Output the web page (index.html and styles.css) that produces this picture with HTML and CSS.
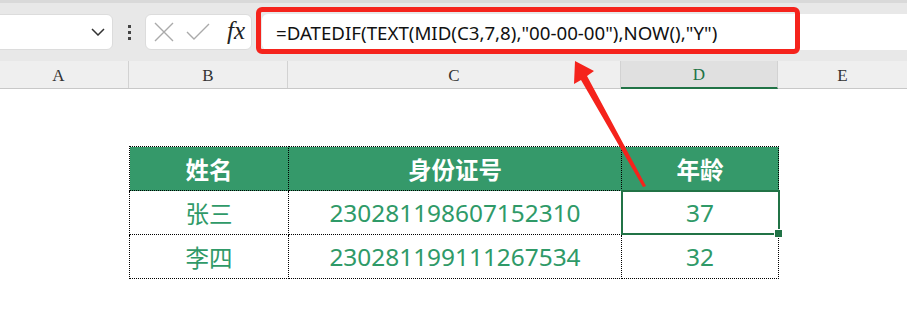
FILE: index.html
```html
<!DOCTYPE html>
<html lang="zh">
<head>
  <meta charset="UTF-8" />
  <title>年龄计算</title>
  <link rel="stylesheet" href="styles.css">
</head>
<body>

  <!-- formula bar -->
  <div class="toolbar">
    <div class="namebox">
      <svg class="chevron" width="14" height="8" viewBox="0 0 14 8"><path d="M1 1 L7 7 L13 1" fill="none" stroke="#333" stroke-width="1.5"/></svg>
    </div>
    <div class="more"><span></span><span></span><span></span></div>
    <div class="fnbox">
      <svg width="22" height="22" viewBox="0 0 22 22"><path d="M2 2 L20 20 M20 2 L2 20" stroke="#aaa" stroke-width="1.4" fill="none"/></svg>
      <svg width="24" height="20" viewBox="0 0 24 20"><path d="M1 10 L8 17 L23 2" stroke="#aaa" stroke-width="1.4" fill="none"/></svg>
      <span class="fx">fx</span>
    </div>
    <div class="formula">=DATEDIF(TEXT(MID(C3,7,8),"00-00-00"),NOW(),"Y")</div>
    <div class="mark"></div>
  </div>

  <!-- column letters -->
  <div class="colhead">
    <div class="col a">A</div>
    <div class="col b">B</div>
    <div class="col c">C</div>
    <div class="col d active">D</div>
    <div class="col e">E</div>
  </div>

  <div class="sheet">
    <table class="grid">
      <tr>
        <th class="w-name">姓名</th>
        <th class="w-id">身份证号</th>
        <th class="w-age">年龄</th>
      </tr>
      <tr>
        <td>张三</td>
        <td>230281198607152310</td>
        <td class="selected">37</td>
      </tr>
      <tr>
        <td>李四</td>
        <td>230281199111267534</td>
        <td>32</td>
      </tr>
    </table>
  </div>

  <svg class="arrow" width="907" height="334" viewBox="0 0 907 334">
    <polygon points="575,61 594,71 587,76 646,186 643,187 581,80 574,84" fill="#f5231c"/>
  </svg>

</body>
</html>
```

FILE: styles.css
```css
* { box-sizing: border-box; }
body {
  margin: 0;
  width: 907px;
  height: 334px;
  overflow: hidden;
  background: #fff;
  font-family: 'Noto Sans', 'Noto Sans CJK SC', sans-serif;
  position: relative;
}

/* formula bar */
.toolbar {
  height: 61px;
  background: #e8e8e8;
  border-top: 3px solid #d9d9d9;
  display: flex;
  align-items: flex-start;
  padding-top: 11px;
  position: relative;
}
.namebox {
  width: 124px;
  height: 36px;
  margin-left: -11px;
  background: #fff;
  border: 1px solid #dcdcdc;
  border-radius: 6px;
  display: flex;
  justify-content: flex-end;
  align-items: center;
  padding-right: 7px;
}
.more {
  width: 32px;
  height: 36px;
  display: flex;
  flex-direction: column;
  align-items: center;
  justify-content: center;
  gap: 3px;
}
.more span {
  width: 3px;
  height: 3px;
  background: #444;
}
.fnbox {
  width: 107px;
  height: 36px;
  background: #fff;
  border: 1px solid #dcdcdc;
  border-radius: 6px;
  display: flex;
  align-items: center;
  gap: 11px;
  padding-left: 7px;
}
.fx {
  font-family: 'Liberation Serif', serif;
  font-style: italic;
  font-size: 25px;
  color: #222;
  margin-left: 6px;
  margin-top: -3px;
}
.formula {
  flex: 1;
  height: 36px;
  margin-left: 10px;
  background: #fff;
  border-radius: 6px 0 0 6px;
  padding-left: 14px;
  display: flex;
  align-items: center;
  font-size: 18.7px;
  color: #111;
  white-space: nowrap;
}
.mark {
  position: absolute;
  left: 256px;
  top: 4px;
  width: 544px;
  height: 47px;
  border: 5px solid #f5231c;
  border-radius: 6px;
}

/* column letters */
.colhead {
  display: flex;
  height: 28px;
  background: #efefef;
  border-bottom: 1px solid #c8c8c8;
  font-family: 'Liberation Serif', serif;
  font-size: 17px;
  color: #333;
}
.col {
  display: flex;
  align-items: center;
  justify-content: center;
  border-right: 1px solid #d2d2d2;
  padding-top: 2px;
}
.col.a { width: 140px; margin-left: -11px; }
.col.b { width: 159px; }
.col.c { width: 333px; }
.col.d { width: 157px; }
.col.e { flex: 1; border-right: none; }
.col.active {
  background: #e0e0e0;
  color: #217346;
  border-bottom: 2px solid #217346;
  margin-bottom: -1px;
}

/* data */
.sheet {
  padding: 57px 0 0 129px;
}
.grid {
  border-collapse: collapse;
  font-size: 24.4px;
  color: #2f9a68;
}
.grid th, .grid td {
  border: 1px dotted #000;
  height: 44px;
  text-align: center;
  padding: 0;
}
.grid th {
  background: #35996a;
  color: #fff;
  font-weight: bold;
  font-size: 23.5px;
}
.grid td:first-child { font-size: 23.5px; }
.w-name { width: 159px; }
.w-id { width: 333px; }
.w-age { width: 157px; }
.selected {
  position: relative;
}
.selected::before {
  content: "";
  position: absolute;
  left: -1px;
  top: -1px;
  right: -2px;
  bottom: -1px;
  border: 2px solid #217346;
}
.selected::after {
  content: "";
  position: absolute;
  right: -5px;
  bottom: -4px;
  width: 7px;
  height: 7px;
  background: #217346;
  border: 1px solid #fff;
}

.arrow {
  position: absolute;
  left: 0;
  top: 0;
  pointer-events: none;
}
```
